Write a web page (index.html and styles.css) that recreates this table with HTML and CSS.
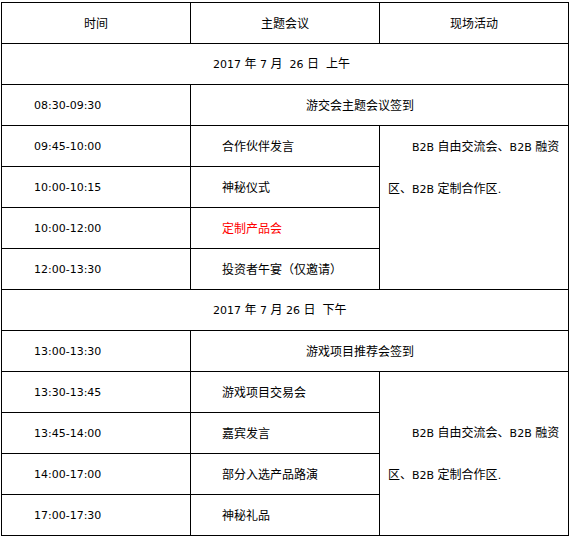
FILE: index.html
```html
<!DOCTYPE html>
<html lang="zh-CN">
<head>
<meta charset="utf-8">
<title>日程</title>
<link rel="stylesheet" href="styles.css">
</head>
<body>
<table class="agenda">
  <colgroup><col class="c"><col class="c"><col class="c"></colgroup>
  <tr class="head">
    <td class="center">时间</td>
    <td class="center">主题会议</td>
    <td class="center">现场活动</td>
  </tr>
  <tr>
    <td colspan="3" class="date"><span class="en">2017 </span>年<span class="en"> 7 </span>月<span class="en">&nbsp; 26 </span>日<span class="en">&nbsp; </span>上午</td>
  </tr>
  <tr>
    <td class="time"><span class="en">08:30-09:30</span></td>
    <td colspan="2" class="signin">游交会主题会议签到</td>
  </tr>
  <tr>
    <td class="time"><span class="en">09:45-10:00</span></td>
    <td class="topic">合作伙伴发言</td>
    <td rowspan="4" class="activity top"><span class="en">B2B </span>自由交流会、<span class="en">B2B </span>融资<br>区、<span class="en">B2B </span>定制合作区<span class="en">.</span></td>
  </tr>
  <tr>
    <td class="time"><span class="en">10:00-10:15</span></td>
    <td class="topic">神秘仪式</td>
  </tr>
  <tr>
    <td class="time"><span class="en">10:00-12:00</span></td>
    <td class="topic red">定制产品会</td>
  </tr>
  <tr>
    <td class="time"><span class="en">12:00-13:30</span></td>
    <td class="topic">投资者午宴（仅邀请）</td>
  </tr>
  <tr>
    <td colspan="3" class="date"><span class="en">2017 </span>年<span class="en"> 7 </span>月<span class="en"> 26 </span>日<span class="en">&nbsp; </span>下午</td>
  </tr>
  <tr>
    <td class="time"><span class="en">13:00-13:30</span></td>
    <td colspan="2" class="signin">游戏项目推荐会签到</td>
  </tr>
  <tr>
    <td class="time"><span class="en">13:30-13:45</span></td>
    <td class="topic">游戏项目交易会</td>
    <td rowspan="4" class="activity"><span class="en">B2B </span>自由交流会、<span class="en">B2B </span>融资<br>区、<span class="en">B2B </span>定制合作区<span class="en">.</span></td>
  </tr>
  <tr>
    <td class="time"><span class="en">13:45-14:00</span></td>
    <td class="topic">嘉宾发言</td>
  </tr>
  <tr>
    <td class="time"><span class="en">14:00-17:00</span></td>
    <td class="topic">部分入选产品路演</td>
  </tr>
  <tr>
    <td class="time"><span class="en">17:00-17:30</span></td>
    <td class="topic">神秘礼品</td>
  </tr>
</table>
</body>
</html>
```

FILE: styles.css
```css
html, body {
  background: #fff;
}
body {
  margin: 2px 0 0 1px;
  font-family: "Noto Sans CJK SC", sans-serif;
  font-size: 12px;
  color: #000;
}
.agenda {
  border-collapse: collapse;
  table-layout: fixed;
  width: 568px;
}
.agenda col.c {
  width: 189px;
}
.agenda td {
  border: 1px solid #000;
  height: 40px;
  padding: 0;
  line-height: 16px;
  vertical-align: middle;
  white-space: nowrap;
}
.en {
  font-family: "DejaVu Sans", sans-serif;
  font-size: 11px;
}
.center {
  text-align: center;
}
.date {
  padding-left: 211px !important;
}
.time {
  padding-left: 32px !important;
}
.topic {
  padding-left: 31px !important;
}
.signin {
  padding-left: 115px !important;
}
.red {
  color: #ff0000;
}
.activity {
  padding: 0 8px !important;
  line-height: 40px !important;
  text-indent: 24px;
}
.activity.top {
  vertical-align: top;
}
```
